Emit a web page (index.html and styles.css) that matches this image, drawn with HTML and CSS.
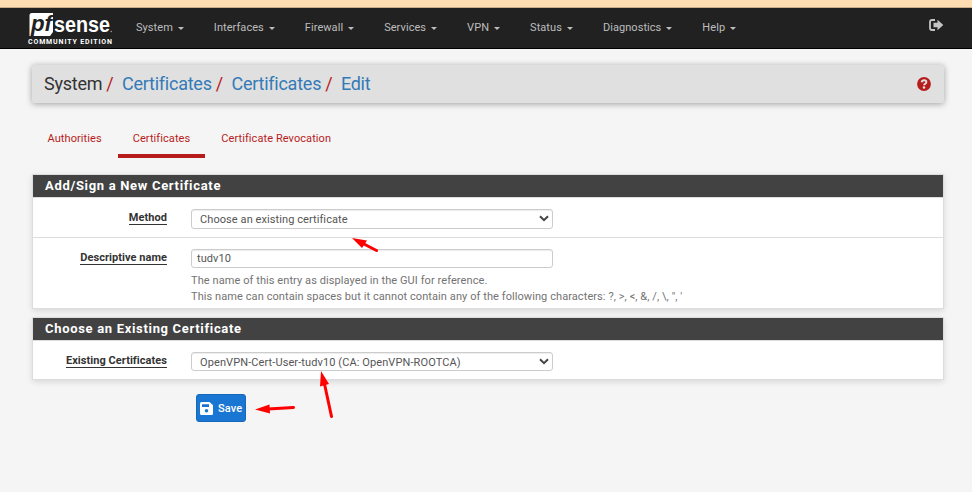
FILE: index.html
```
<!DOCTYPE html>
<html lang="en">
<head>
<meta charset="utf-8">
<title>System: Certificates: Edit</title>
<link rel="stylesheet" href="styles.css">
</head>
<body>
<div class="topstrip"></div>
<nav class="navbar">
  <a class="logo">
    <svg width="86" height="38" viewBox="0 0 86 38">
      <path d="M4 1H25V20L22 24H1.5V3Q1.5 1 4 1Z" fill="#fff"/>
      <text class="logo-pf" x="3" y="18.5" textLength="21" lengthAdjust="spacingAndGlyphs">pf</text>
      <text class="logo-sense" x="26" y="19.5" textLength="56" lengthAdjust="spacingAndGlyphs">sense</text>
      <circle cx="83.3" cy="19.5" r=".8" fill="#999"/>
      <text class="logo-edition" x="0" y="31.5" textLength="84">COMMUNITY EDITION</text>
    </svg>
  </a>
  <ul class="menu">
    <li>System<i></i></li><li>Interfaces<i></i></li><li>Firewall<i></i></li><li>Services<i></i></li><li>VPN<i></i></li><li>Status<i></i></li><li>Diagnostics<i></i></li><li>Help<i></i></li>
  </ul>
  <svg class="logout" width="15" height="12" viewBox="0 0 15 12"><path d="M6 1H3Q1 1 1 3V9Q1 11 3 11H6" fill="none" stroke="#c4c4c4" stroke-width="1.8"/><path d="M4.5 3.7H8.5V.7L14.3 6 8.5 11.3V8.3H4.5Z" fill="#c4c4c4"/></svg>
</nav>
<main class="container">
  <header class="crumbs">
    <ol><li>System</li><li><a>Certificates</a></li><li><a>Certificates</a></li><li><a>Edit</a></li></ol>
    <svg width="14" height="14" viewBox="0 0 14 14"><circle cx="7" cy="7" r="6.9" fill="#b71c1c"/><path d="M4.6 5.2Q5 3.2 7.1 3.2Q9.4 3.2 9.4 5.1Q9.4 6.2 8.1 6.8Q7.1 7.3 7.1 8.3" fill="none" stroke="#e0e0e0" stroke-width="1.9"/><circle cx="7" cy="10.5" r="1.3" fill="#e0e0e0"/></svg>
  </header>
  <ul class="tabs"><li>Authorities</li><li class="active">Certificates</li><li>Certificate Revocation</li></ul>
  <section class="panel">
    <h2>Add/Sign a New Certificate</h2>
    <div class="row row-method">
      <label><span>Method</span></label>
      <div class="control select">Choose an existing certificate<svg width="10" height="7" viewBox="0 0 10 7"><path d="M1 1.2 5 5.2 9 1.2"/></svg></div>
    </div>
    <div class="row row-name">
      <label><span>Descriptive name</span></label>
      <div>
        <div class="control">tudv10</div>
        <p class="help">The name of this entry as displayed in the GUI for reference.<br>This name can contain spaces but it cannot contain any of the following characters: ?, &gt;, &lt;, &amp;, /, \, ", '</p>
      </div>
    </div>
  </section>
  <section class="panel">
    <h2>Choose an Existing Certificate</h2>
    <div class="row row-existing">
      <label><span>Existing Certificates</span></label>
      <div class="control select">OpenVPN-Cert-User-tudv10 (CA: OpenVPN-ROOTCA)<svg width="10" height="7" viewBox="0 0 10 7"><path d="M1 1.2 5 5.2 9 1.2"/></svg></div>
    </div>
  </section>
  <button class="save"><svg width="13" height="13" viewBox="0 0 13 13"><path fill-rule="evenodd" d="M1.5 0H9.5L13 3.2V11.5Q13 13 11.5 13H1.5Q0 13 0 11.5V1.5Q0 0 1.5 0ZM2 2.2V5H9V2.2ZM6.5 7A1.8 1.8 0 1 0 6.5 10.6 1.8 1.8 0 1 0 6.5 7Z" fill="#fff"/></svg>Save</button>
</main>
<svg class="annotations" width="972" height="492" viewBox="0 0 972 492">
  <path d="M376.5 250.5 362 243M331.5 416.5 324.5 384M293.5 407.5 268 409" />
  <path class="head" d="M352 238 367 240.5 362 248ZM321 371 329 384 320 386.5ZM255 409.5 269.5 404.5 270 413.5Z"/>
</svg>
</body>
</html>
```
FILE: styles.css
```
* { box-sizing: border-box; }
body { margin: 0; width: 972px; height: 492px; overflow: hidden; background: #f5f5f5; font-family: Roboto, sans-serif; font-size: 11px; line-height: 16px; letter-spacing: .08px; color: #333; }
ul, ol, p, h2 { margin: 0; padding: 0; list-style: none; }
.topstrip { height: 8px; background: #ffddb3; border-bottom: 1px solid #c9ad8c; }
.navbar { height: 41px; display: flex; align-items: flex-start; background: #212121; border-bottom: 1px solid #000; padding: 0 28px 0 28px; }
.logo { width: 93px; padding-top: 4px; }
.logo svg { display: block; overflow: visible; }
.logo-pf { font: italic bold 22px "Liberation Sans", sans-serif; fill: #212121; letter-spacing: 0; }
.logo-sense { font: bold 22px "Liberation Sans", sans-serif; fill: #fff; letter-spacing: 0; }
.logo-edition { font: bold 7px Roboto, sans-serif; fill: #fff; letter-spacing: 0; }
.menu { display: flex; color: #bdbdbd; }
.menu li { padding: 12px 15px 0; display: flex; letter-spacing: .06px; }
.menu i { border: 3px solid transparent; border-top-color: #bdbdbd; border-bottom: 0; margin: 7px 0 0 5px; height: 3px; }
.logout { margin: 11px 0 0 auto; }
.container { padding: 16px 28px 0 32px; }
.crumbs { height: 38px; display: flex; align-items: center; justify-content: space-between; padding: 0 13px 0 12px; background: #e0e0e0; box-shadow: 0 1px 6px rgba(0,0,0,.35); border-radius: 2px; }
.crumbs ol { display: flex; font-size: 18px; line-height: 24px; letter-spacing: -.24px; }
.crumbs li + li::before { content: "/"; color: #b71c1c; padding: 0 8.5px 0 4px; }
.crumbs a { color: #337ab7; }
.tabs { display: flex; height: 38px; margin-top: 17px; padding-left: 1px; color: #b71c1c; }
.tabs li { padding: 11px 15px 0; height: 38px; letter-spacing: .08px; }
.tabs li:first-child { padding: 11px 16px 0 14.5px; }
.tabs .active { margin-right: 1px; border-bottom: 4px solid #b71c1c; }
.panel { width: 912px; margin-top: 16px; background: #fff; border: 1px solid #ddd; box-shadow: 0 2px 6px rgba(0,0,0,.12); }
.panel + .panel { margin-top: 8px; }
.panel h2 { height: 23px; padding-left: 12px; background: #424242; border-bottom: 1px solid #ddd; color: #fff; font-size: 13px; line-height: 21px; letter-spacing: .68px; }
.row { display: flex; }
.row-method { height: 40px; padding-top: 11px; border-bottom: 1px solid #ddd; }
.row-name { height: 70px; padding-top: 11px; }
.row-existing { height: 38px; padding-top: 11px; }
.row label { width: 134px; margin-right: 24px; padding-top: 2px; text-align: right; font-weight: bold; line-height: 14px; letter-spacing: .05px; }
.row label span { display: inline-block; border-bottom: 1px solid #333; line-height: 13px; }
.control { width: 362px; height: 19px; border: 1px solid #ccc; border-radius: 3px; padding-left: 5px; line-height: 17px; color: #555; box-shadow: inset 0 1px 1px rgba(0,0,0,.075); }
.select { display: flex; justify-content: space-between; padding: 0 3px 0 8px; line-height: 19px; letter-spacing: .1px; }
.row-method .control { height: 20px; line-height: 19px; letter-spacing: .08px; }
.select svg { margin-top: 5px; fill: none; stroke: #444; stroke-width: 2; }
.help { padding-top: 5px; color: #737373; }
.save { display: flex; align-items: center; gap: 5px; width: 50px; height: 28px; margin: 14px 0 0 164px; padding: 0 0 0 3px; border: 1px solid #1768b8; border-radius: 3px; background: #1976d2; color: #fff; font: 500 11px Roboto, sans-serif; letter-spacing: .08px; }
.annotations { position: absolute; left: 0; top: 0; pointer-events: none; fill: none; stroke: #f00; stroke-width: 3; stroke-linecap: round; }
.annotations .head { fill: #f00; stroke: none; }
```
